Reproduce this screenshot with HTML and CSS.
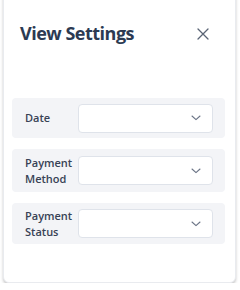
FILE: index.html
```html
<!DOCTYPE html>
<html>
<head>
<meta charset="utf-8">
<link rel="stylesheet" href="styles.css">
</head>
<body>
<div class="card">
  <div class="header">
    <h1 class="title">View Settings</h1>
    <button class="close" aria-label="Close">
      <svg width="12" height="12" viewBox="0 0 12 12"><path d="M1 1L11 11M11 1L1 11" stroke="#5a6475" stroke-width="1.3" fill="none" stroke-linecap="round"/></svg>
    </button>
  </div>
  <div class="rows">
    <div class="row r1">
      <div class="label">Date</div>
      <div class="select"><svg class="chev" width="10" height="6" viewBox="0 0 10 6"><path d="M1 1L5 4.6L9 1" stroke="#6b7486" stroke-width="1.1" fill="none" stroke-linecap="round" stroke-linejoin="round"/></svg></div>
    </div>
    <div class="row r2">
      <div class="label">Payment<br>Method</div>
      <div class="select"><svg class="chev" width="10" height="6" viewBox="0 0 10 6"><path d="M1 1L5 4.6L9 1" stroke="#6b7486" stroke-width="1.1" fill="none" stroke-linecap="round" stroke-linejoin="round"/></svg></div>
    </div>
    <div class="row r3">
      <div class="label">Payment<br>Status</div>
      <div class="select"><svg class="chev" width="10" height="6" viewBox="0 0 10 6"><path d="M1 1L5 4.6L9 1" stroke="#6b7486" stroke-width="1.1" fill="none" stroke-linecap="round" stroke-linejoin="round"/></svg></div>
    </div>
  </div>
</div>
</body>
</html>
```
FILE: styles.css
```css
html, body {
  margin: 0;
  padding: 0;
  background: #ffffff;
  font-family: "Open Sans", "Noto Sans", sans-serif;
}
.card {
  margin: -10px 0 0 3px;
  width: 233px;
  height: 293px;
  box-sizing: border-box;
  background: #fff;
  border: 1px solid #e9ebef;
  border-radius: 6px;
  box-shadow: 0 2px 3px rgba(0, 0, 0, 0.22);
  display: flex;
  flex-direction: column;
}
.header {
  display: flex;
  align-items: center;
  justify-content: space-between;
  padding: 28px 26px 0 16px;
  height: 28px;
}
.title {
  margin: 0;
  font-size: 18px;
  font-weight: 700;
  color: #2c3a52;
  letter-spacing: -0.5px;
}
.close {
  border: 0;
  background: none;
  padding: 0;
  width: 12px;
  height: 12px;
  display: flex;
  margin-top: 1px;
}
.rows {
  margin-top: 51px;
  padding: 0 10px 0 8px;
  display: flex;
  flex-direction: column;
  gap: 11px;
}
.row {
  background: #f3f4f7;
  border-radius: 4px;
  display: flex;
  align-items: center;
  padding: 0 12px 0 13px;
}
.r1 { height: 40px; }
.r2 { height: 43px; }
.r3 { height: 41px; }
.label {
  width: 53px;
  font-size: 11px;
  font-weight: 600;
  line-height: 16px;
  color: #384255;
}
.select {
  flex: 1;
  height: 29px;
  box-sizing: border-box;
  background: #fff;
  border: 1px solid #dfe3ea;
  border-radius: 4px;
  display: flex;
  align-items: center;
  justify-content: flex-end;
  padding-right: 11px;
}
```
